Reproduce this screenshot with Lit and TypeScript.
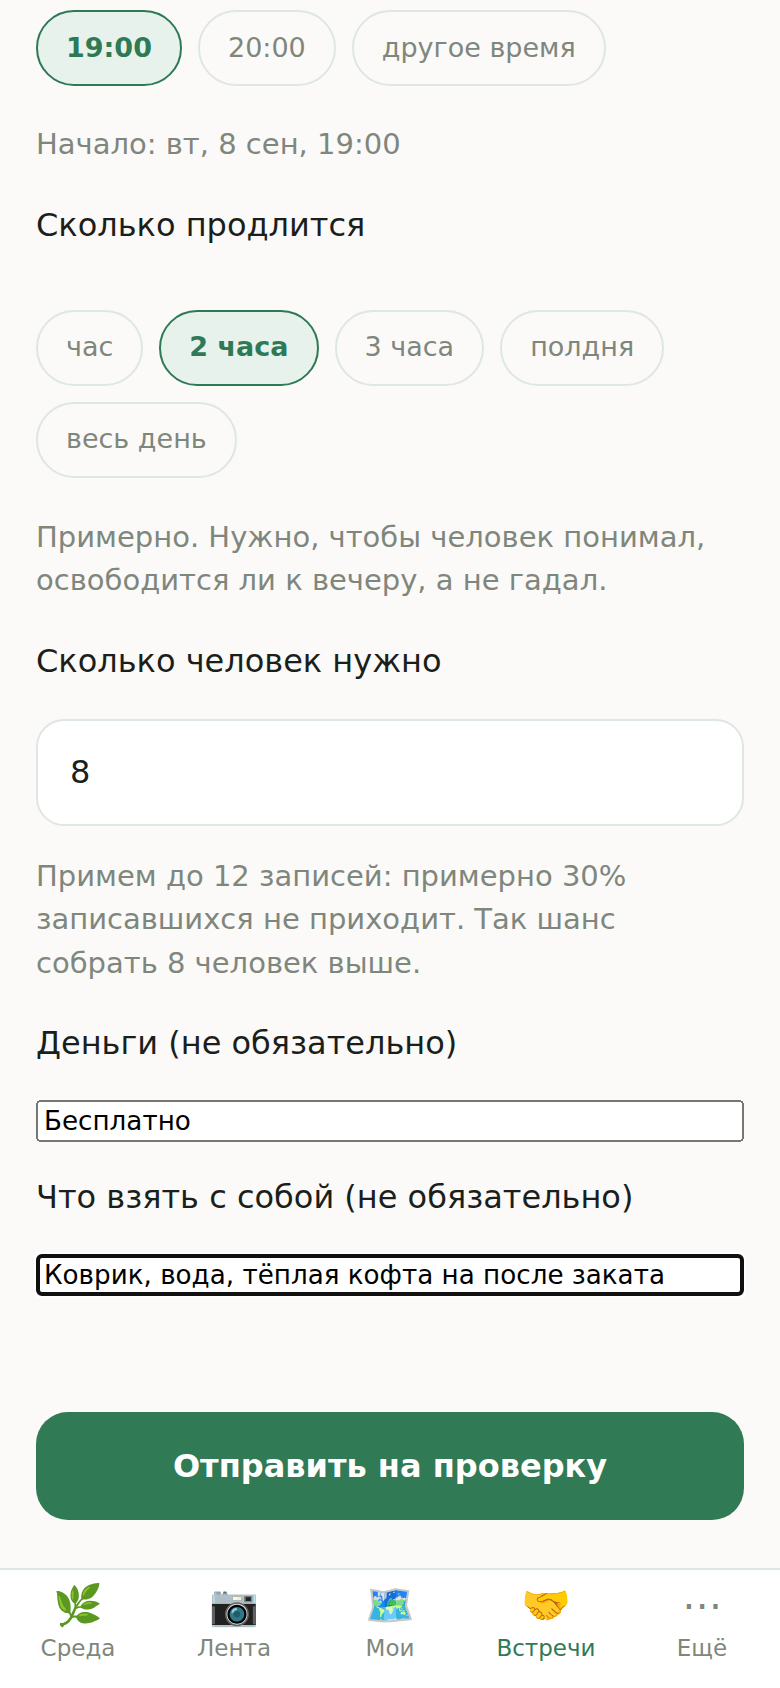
import { LitElement, html, css } from "lit";
import { customElement } from "lit/decorators.js";

@customElement("app-root")
export class AppRoot extends LitElement {
  static styles = css`
    :host {
      display: block;
      zoom: 2;
      font-family: "DejaVu Sans", sans-serif;
      background: #fbfaf8;
      color: #1a1f1c;
    }
    .page { height: 844px; display: flex; flex-direction: column; overflow: hidden; }
    main { flex: 1; min-height: 0; padding: 5px 18px 0; display: flex; flex-direction: column; }
    .chips { display: flex; flex-wrap: wrap; gap: 8px; }
    .chip {
      box-sizing: border-box; height: 38px; padding: 0 14px 1px; border-radius: 19px;
      border: 1px solid #dfe7e2; color: #7f877d; font-size: 13.5px;
      display: flex; align-items: center; background: transparent;
    }
    .chip.on { background: #e8f2ec; border-color: #2f7a56; color: #2f7a56; font-weight: 700; }
    .note { font-size: 14.5px; line-height: 21.75px; color: #7f877d; }
    .label { font-size: 16px; line-height: 22px; color: #1a1f1c; }
    .num {
      box-sizing: border-box; height: 53.5px; border: 1px solid #dfe7e2; border-radius: 14px;
      background: #fff; padding: 0 16px; display: flex; align-items: center; font-size: 16px;
    }
    input { display: block; width: 100%; height: 21px; box-sizing: border-box; font-family: "DejaVu Sans", sans-serif; font-size: 13.1px; }
    .btn {
      height: 54px; border-radius: 16px; background: #307a56; color: #fff; font-size: 16px;
      font-weight: 700; display: flex; align-items: center; justify-content: center;
    }
    nav {
      height: 60px; box-sizing: border-box; border-top: 1px solid #dfe7e2; background: #fff;
      display: grid; grid-template-columns: repeat(5, 1fr);
    }
    .tab { display: flex; flex-direction: column; align-items: center; padding-top: 4px; color: #7f877d; font-size: 11.5px; }
    .tab.on { color: #2f7a56; }
    .ic { font-size: 20px; line-height: 27px; height: 27px; }
    .tl { line-height: 14px; margin-top: 1px; }
    .m1 { margin-top: 18.5px; }
    .m2 { margin-top: 18px; }
    .m3 { margin-top: 31.5px; }
    .m4 { margin-top: 19px; }
    .m5 { margin-top: 18px; }
    .m6 { margin-top: 18px; }
    .m7 { margin-top: 14.5px; }
    .m8 { margin-top: 18px; }
    .m9 { margin-top: 17.5px; }
    .m10 { margin-top: 16.5px; }
    .m11 { margin-top: 17.5px; }
    .m12 { margin-top: 58px; }
  `;

  firstUpdated() {
    (this.renderRoot.querySelector("input.focus") as HTMLInputElement)?.focus();
  }

  render() {
    const tabs = [
      ["🌿", "Среда", false],
      ["📷", "Лента", false],
      ["🗺️", "Мои", false],
      ["🤝", "Встречи", true],
      ["⋯", "Ещё", false],
    ] as const;
    return html`
      <div class="page">
        <main>
          <div class="chips">
            <div class="chip on">19:00</div>
            <div class="chip">20:00</div>
            <div class="chip">другое время</div>
          </div>
          <div class="note m1">Начало: вт, 8 сен, 19:00</div>
          <div class="label m2">Сколько продлится</div>
          <div class="chips m3">
            <div class="chip">час</div>
            <div class="chip on">2 часа</div>
            <div class="chip">3 часа</div>
            <div class="chip">полдня</div>
            <div class="chip">весь день</div>
          </div>
          <div class="note m4">Примерно. Нужно, чтобы человек понимал,<br />освободится ли к вечеру, а не гадал.</div>
          <div class="label m5">Сколько человек нужно</div>
          <div class="num m6">8</div>
          <div class="note m7">Примем до 12 записей: примерно 30%<br />записавшихся не приходит. Так шанс<br />собрать 8 человек выше.</div>
          <div class="label m8">Деньги (не обязательно)</div>
          <input class="m9" .value=${"Бесплатно"} />
          <div class="label m10">Что взять с собой (не обязательно)</div>
          <input class="m11 focus" .value=${"Коврик, вода, тёплая кофта на после заката"} />
          <div class="btn m12">Отправить на проверку</div>
        </main>
        <nav>
          ${tabs.map(
            ([i, t, on]) => html`<div class="tab ${on ? "on" : ""}"><div class="ic">${i}</div><div class="tl">${t}</div></div>`
          )}
        </nav>
      </div>
    `;
  }
}
